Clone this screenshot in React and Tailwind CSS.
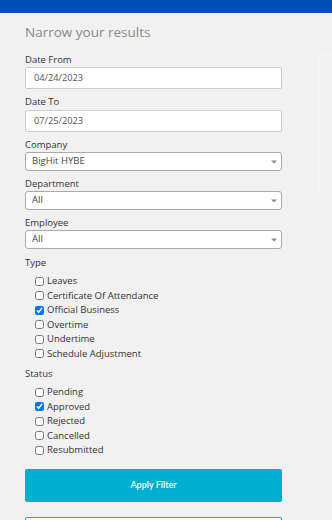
import { useState } from 'react';

const types = [
  'Leaves',
  'Certificate Of Attendance',
  'Official Business',
  'Overtime',
  'Undertime',
  'Schedule Adjustment',
];
const statuses = ['Pending', 'Approved', 'Rejected', 'Cancelled', 'Resubmitted'];

function Caret() {
  return (
    <svg width="6" height="4" viewBox="0 0 6 4" className="shrink-0">
      <path d="M0 0.5h6L3 3.5z" fill="#8a8a8a" />
    </svg>
  );
}

function Field({ label, children }) {
  return (
    <div className="flex flex-col">
      <label className="h-[14px] text-[9.5px] leading-[14px] text-[#333]">{label}</label>
      {children}
    </div>
  );
}

function DateInput({ value }) {
  return (
    <div className="flex h-[22px] items-center rounded-[2px] border border-[#ccc] bg-white pl-[8px] text-[9.25px] text-[#555]">
      {value}
    </div>
  );
}

function Select({ value }) {
  return (
    <div className="flex h-[19px] items-center justify-between rounded-[3px] border border-[#aaa] bg-white pl-[6px] pr-[4px] text-[9.5px] text-[#444]">
      <span>{value}</span>
      <Caret />
    </div>
  );
}

function CheckList({ items, checked, onToggle }) {
  return (
    <div className="flex flex-col pl-[10px] pt-[4px]">
      {items.map((item) => (
        <label key={item} className="flex h-[14.5px] items-center gap-[3px] text-[9.5px] text-[#333]">
          <input
            type="checkbox"
            checked={checked.includes(item)}
            onChange={() => onToggle(item)}
            className="m-0 h-[9px] w-[9px]"
          />
          <span>{item}</span>
        </label>
      ))}
    </div>
  );
}

export default function App() {
  const [typeChecked, setTypeChecked] = useState(['Official Business']);
  const [statusChecked, setStatusChecked] = useState(['Approved']);

  const toggle = (list, setList) => (item) =>
    setList(list.includes(item) ? list.filter((x) => x !== item) : [...list, item]);

  return (
    <div className="h-[520px] overflow-hidden bg-[#f0f1f0]" style={{ fontFamily: '"Open Sans", sans-serif' }}>
      <div className="h-[13px] bg-[#004fb4]" />
      <div className="flex">
        <div className="ml-[25px] w-[257px]">
          <h2 className="mt-[9px] h-[20px] text-[13.5px] leading-[20px] text-[#8a8a8a]">Narrow your results</h2>
          <div className="mt-[11px] flex flex-col gap-[6px]">
            <Field label="Date From">
              <DateInput value="04/24/2023" />
            </Field>
            <Field label="Date To">
              <div className="mt-[1px]">
                <DateInput value="07/25/2023" />
              </div>
            </Field>
            <Field label="Company">
              <Select value="BigHit HYBE" />
            </Field>
            <Field label="Department">
              <Select value="All" />
            </Field>
            <Field label="Employee">
              <Select value="All" />
            </Field>
          </div>
          <div className="mt-[7px] h-[14px] text-[9.5px] leading-[14px] text-[#333]">Type</div>
          <CheckList items={types} checked={typeChecked} onToggle={toggle(typeChecked, setTypeChecked)} />
          <div className="mt-[6px] h-[14px] text-[9.5px] leading-[14px] text-[#333]">Status</div>
          <CheckList items={statuses} checked={statusChecked} onToggle={toggle(statusChecked, setStatusChecked)} />
          <button
            type="button"
            className="mt-[11px] flex h-[33px] w-full items-center justify-center rounded-[2px] bg-[#00b0cf] text-[9px] font-semibold text-white"
            style={{ fontFamily: 'Lato, sans-serif' }}
          >
            Apply Filter
          </button>
          <button
            type="button"
            className="mt-[15px] h-[33px] w-full rounded-[2px] border border-solid border-[#17a9c6] bg-white"
          />
        </div>
        <div className="ml-[36px] mt-[40px] h-[140px] flex-1 bg-[#f4f4f4]" />
      </div>
    </div>
  );
}
